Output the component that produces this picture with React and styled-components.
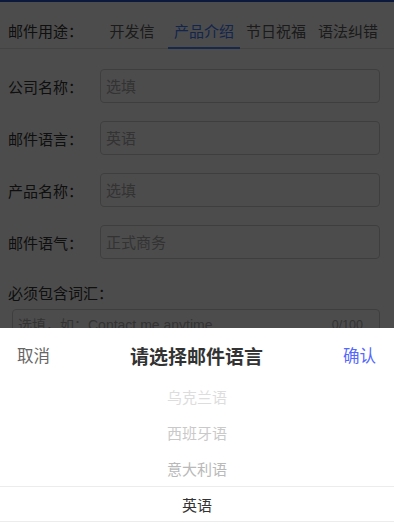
import React from "react";
import styled, { createGlobalStyle } from "styled-components";

const GlobalStyle = createGlobalStyle`
  html, body { margin: 0; padding: 0; background: #ffffff; }
  body {
    font-family: "Liberation Sans", "Noto Sans CJK SC", sans-serif;
    color: #333333;
    overflow: hidden;
  }
  * { box-sizing: border-box; }
`;

const Page = styled.div`
  display: flex;
  flex-direction: column;
  min-height: 529px;
  background: #ffffff;
`;

const TopBar = styled.div`
  height: 2px;
  background: #2a55c8;
`;

const PurposeBar = styled.div`
  display: flex;
  align-items: stretch;
  margin-top: 10px;
  height: 37px;
  border-bottom: 1px solid #e2e2e2;
`;

const PurposeLabel = styled.div`
  width: 96px;
  padding-left: 8px;
  display: flex;
  align-items: center;
  font-size: 15px;
  color: #333333;
`;

const Tab = styled.div`
  position: relative;
  width: 72px;
  display: flex;
  align-items: center;
  justify-content: center;
  font-size: 15px;
  color: ${(p) => (p.$active ? "#3f7cff" : "#5a5a5a")};

  &::after {
    content: "";
    position: absolute;
    left: 0;
    right: 0;
    bottom: -1px;
    height: 2px;
    background: ${(p) => (p.$active ? "#4a86ff" : "transparent")};
  }
`;

const Form = styled.div`
  display: flex;
  flex-direction: column;
  gap: 18px;
  padding: 20px 14px 0 8px;
`;

const Field = styled.div`
  display: flex;
  align-items: center;
`;

const FieldLabel = styled.div`
  width: 92px;
  font-size: 15px;
  color: #333333;
  white-space: nowrap;
`;

const TextInput = styled.input`
  flex: 1;
  min-width: 0;
  height: 34px;
  border: 1px solid #cfcfcf;
  border-radius: 4px;
  padding: 0 5px;
  font-family: inherit;
  font-size: 15px;
  color: #333333;
  background: #ffffff;
  outline: none;

  &::placeholder { color: #aaaaaa; }
`;

const WordsSection = styled.div`
  display: flex;
  flex-direction: column;
  padding: 24px 14px 0 8px;
`;

const WordsLabel = styled.div`
  font-size: 15px;
  line-height: 22px;
  color: #333333;
`;

const TextAreaBox = styled.div`
  display: flex;
  align-items: flex-start;
  margin: 4px 0 0 4px;
  height: 90px;
  border: 1px solid #cfcfcf;
  border-radius: 4px;
  padding: 5px 16px 0 5px;
`;

const WordsArea = styled.textarea`
  flex: 1;
  border: none;
  outline: none;
  resize: none;
  padding: 0;
  height: 60px;
  font-family: inherit;
  font-size: 14px;
  line-height: 20px;
  color: #333333;

  &::placeholder { color: #aaaaaa; }
`;

const Counter = styled.span`
  font-size: 12.5px;
  line-height: 20px;
  color: #aaaaaa;
`;

const Mask = styled.div`
  position: fixed;
  inset: 0;
  background: rgba(0, 0, 0, 0.7);
`;

const Sheet = styled.div`
  position: fixed;
  left: 0;
  right: 0;
  top: 328px;
  bottom: 0;
  background: #ffffff;
  display: flex;
  flex-direction: column;
  overflow: hidden;
`;

const SheetHeader = styled.div`
  display: flex;
  align-items: center;
  justify-content: space-between;
  height: 50px;
  padding: 4px 18px 0 17px;
  flex-shrink: 0;
`;

const HeaderButton = styled.button`
  border: none;
  background: none;
  padding: 0;
  font-family: inherit;
  font-size: 16.5px;
  color: ${(p) => (p.$primary ? "#5468ff" : "#666666")};
  cursor: pointer;
`;

const SheetTitle = styled.div`
  font-size: 19px;
  font-weight: 700;
  color: #333333;
`;

const Wheel = styled.div`
  display: flex;
  flex-direction: column;
`;

const Option = styled.div`
  height: 36px;
  display: flex;
  align-items: center;
  justify-content: center;
  font-size: 15px;
  color: ${(p) => p.$color};
  border-top: ${(p) => (p.$selected ? "1px solid #ececec" : "none")};
  border-bottom: ${(p) => (p.$selected ? "1px solid #ececec" : "none")};
`;

const tabs = ["开发信", "产品介绍", "节日祝福", "语法纠错"];

const fields = [
  { label: "公司名称：", placeholder: "选填" },
  { label: "邮件语言：", placeholder: "英语" },
  { label: "产品名称：", placeholder: "选填" },
  { label: "邮件语气：", placeholder: "正式商务" },
];

const options = [
  { text: "乌克兰语", color: "#dddddd" },
  { text: "西班牙语", color: "#c9c9c9" },
  { text: "意大利语", color: "#b9b9b9" },
  { text: "英语", color: "#333333", selected: true },
];

export default function App() {
  return (
    <>
      <GlobalStyle />
      <Page>
        <TopBar />
        <PurposeBar>
          <PurposeLabel>邮件用途：</PurposeLabel>
          {tabs.map((t) => (
            <Tab key={t} $active={t === "产品介绍"}>
              {t}
            </Tab>
          ))}
        </PurposeBar>
        <Form>
          {fields.map((f) => (
            <Field key={f.label}>
              <FieldLabel>{f.label}</FieldLabel>
              <TextInput placeholder={f.placeholder} />
            </Field>
          ))}
        </Form>
        <WordsSection>
          <WordsLabel>必须包含词汇：</WordsLabel>
          <TextAreaBox>
            <WordsArea placeholder="选填，如：Contact me anytime" />
            <Counter>0/100</Counter>
          </TextAreaBox>
        </WordsSection>
      </Page>
      <Mask />
      <Sheet>
        <SheetHeader>
          <HeaderButton>取消</HeaderButton>
          <SheetTitle>请选择邮件语言</SheetTitle>
          <HeaderButton $primary>确认</HeaderButton>
        </SheetHeader>
        <Wheel>
          {options.map((o) => (
            <Option key={o.text} $color={o.color} $selected={o.selected}>
              {o.text}
            </Option>
          ))}
        </Wheel>
      </Sheet>
    </>
  );
}
